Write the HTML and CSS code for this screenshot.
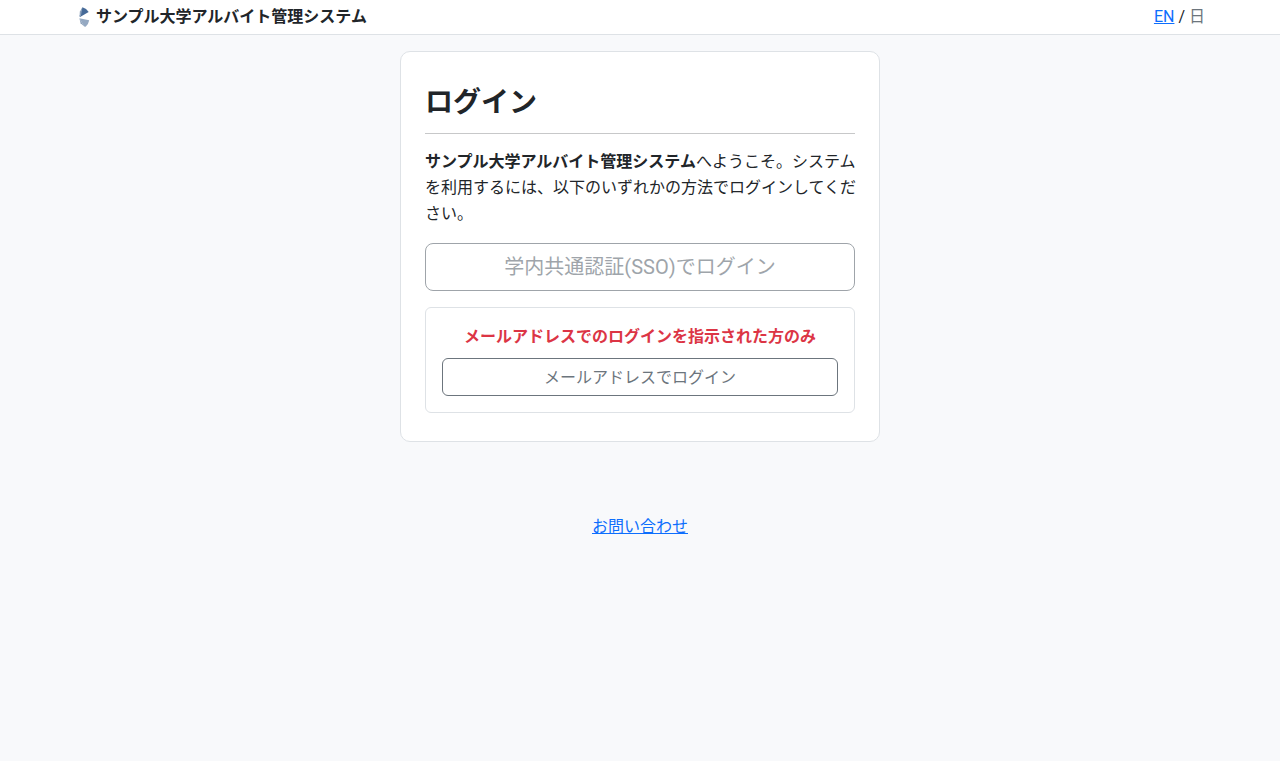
FILE: index.html
```html
<!DOCTYPE html>
<html lang="ja">
<head>
<meta charset="utf-8">
<meta name="viewport" content="width=device-width, initial-scale=1">
<title>ログイン</title>
<link rel="stylesheet" href="styles.css">
</head>
<body>
<header class="site-header">
  <div class="header-inner">
    <div class="brand">
      <svg class="brand-logo" viewBox="0 0 12 20" aria-hidden="true">
        <path class="logo-dark" d="M4.4 0.2 Q8.6 1.4 10.7 4.9 L2 10 L1.6 9Z"/>
        <path class="logo-edge" d="M4.4 0.2 L1.8 4.8 L1.6 9.8 L3 8.6Z"/>
        <path class="logo-light" d="M1.4 11.2 L11.2 13.2 Q10.6 17 7.6 19.7 L6.2 19.4Z"/>
        <path class="logo-edge" d="M1.4 11.2 L2.6 16.2 L6.2 19.4Z"/>
      </svg>
      <strong>サンプル大学アルバイト管理システム</strong>
    </div>
    <nav class="languages"><a class="link" href="#">EN</a> / <span class="current-language">日</span></nav>
  </div>
</header>
<main class="card">
  <h1 class="card-title">ログイン</h1>
  <hr class="divider">
  <p class="intro"><strong>サンプル大学アルバイト管理システム</strong>へようこそ。システムを利用するには、以下のいずれかの方法でログインしてください。</p>
  <button class="button button-large" type="button" disabled>学内共通認証(SSO)でログイン</button>
  <section class="mail-login">
    <p class="notice">メールアドレスでのログインを指示された方のみ</p>
    <button class="button" type="button">メールアドレスでログイン</button>
  </section>
</main>
<footer class="site-footer"><a class="link" href="#">お問い合わせ</a></footer>
</body>
</html>
```
FILE: styles.css
```css
* {
  box-sizing: border-box;
}

body {
  margin: 0;
  background: #f8f9fb;
  color: #212529;
  font-family: Roboto, "Noto Sans CJK JP", sans-serif;
  font-size: 16px;
  line-height: 26px;
}

.link {
  color: #0d6efd;
  text-decoration: underline;
}

.site-header {
  background: #fff;
  border-bottom: 1px solid #dee2e6;
}

.header-inner {
  display: flex;
  justify-content: space-between;
  max-width: 1140px;
  margin: 0 auto;
  padding: 4px 5px 4px 8px;
}

.brand {
  display: flex;
  align-items: center;
  gap: 6px;
}

.brand-logo {
  width: 12px;
  height: 20px;
}

.logo-dark {
  fill: #466a98;
}

.logo-light {
  fill: #95a9c2;
}

.logo-edge {
  fill: #8a9fba;
}

.current-language {
  color: #6c757d;
}

.card {
  max-width: 480px;
  margin: 16px auto 0;
  padding: 24px 24px 28px;
  background: #fff;
  border: 1px solid #dee2e6;
  border-radius: 10px;
}

.card-title {
  margin: 0;
  padding-top: 8px;
  font-size: 28px;
  line-height: 38px;
  font-weight: 700;
}

.divider {
  margin: 11px 0 15px;
  border: 0;
  border-top: 1px solid #c7c8c9;
}

.intro {
  margin: 0 -4px 16px 0;
}

.button {
  display: block;
  width: 100%;
  padding: 7px 12px 5px;
  background: transparent;
  border: 1px solid #6c757d;
  border-radius: 6px;
  color: #6c757d;
  font-family: inherit;
  font-size: 16px;
  line-height: 24px;
}

.button-large {
  padding: 8px 16px;
  border-radius: 8px;
  font-size: 20px;
  line-height: 30px;
}

.button:disabled {
  opacity: 0.65;
}

.mail-login {
  margin-top: 16px;
  padding: 17px 16px 16px;
  border: 1px solid #dee2e6;
  border-radius: 6px;
}

.notice {
  margin: 0 0 9px;
  color: #dc3545;
  font-weight: 700;
  line-height: 24px;
  text-align: center;
}

.site-footer {
  margin-top: 72px;
  text-align: center;
}
```
